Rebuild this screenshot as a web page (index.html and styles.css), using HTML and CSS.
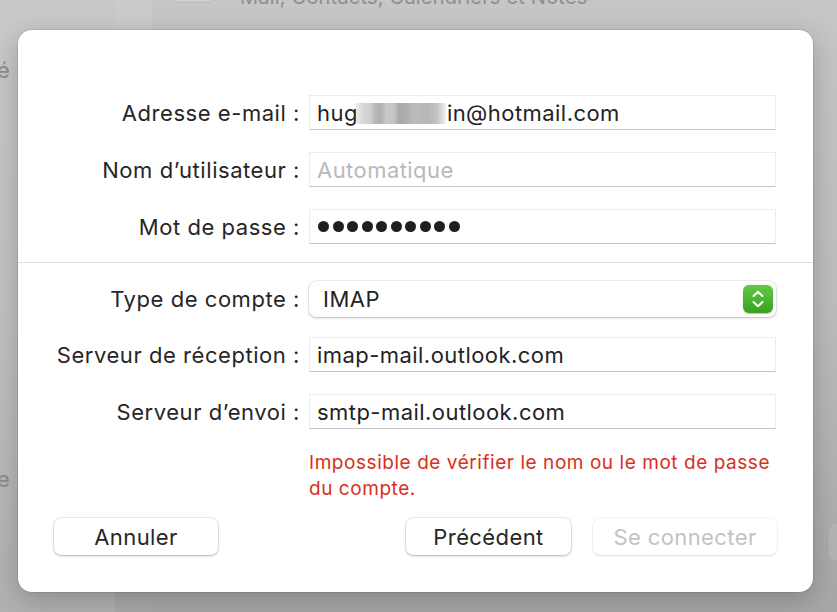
FILE: index.html
```html
<!DOCTYPE html>
<html lang="fr">
<head>
<meta charset="utf-8">
<title>Compte de messagerie</title>
<link rel="stylesheet" href="styles.css">
</head>
<body>
<div class="backdrop">
  <aside class="sidebar">
    <span class="side-text t1">é</span>
    <span class="side-text t2">e</span>
  </aside>
  <div class="strip"></div>
  <main class="pane">
    <div class="pane-row">
      <span class="pane-icon"></span>
      <span class="pane-title">Mail, Contacts, Calendriers et Notes</span>
    </div>
    <div class="pane-edge"></div>
  </main>
</div>

<div class="dialog">
  <div class="form">
    <div class="row">
      <label class="label">Adresse e-mail :</label>
      <div class="field">hug<span class="blur"></span>in@hotmail.com</div>
    </div>
    <div class="row">
      <label class="label">Nom d’utilisateur :</label>
      <div class="field placeholder">Automatique</div>
    </div>
    <div class="row">
      <label class="label">Mot de passe :</label>
      <div class="field dots"><span class="dot"></span><span class="dot"></span><span class="dot"></span><span class="dot"></span><span class="dot"></span><span class="dot"></span><span class="dot"></span><span class="dot"></span><span class="dot"></span><span class="dot"></span></div>
    </div>
  </div>

  <div class="sep"></div>

  <div class="form form2">
    <div class="row">
      <label class="label">Type de compte :</label>
      <div class="select">
        <span class="select-value">IMAP</span>
        <span class="stepper">
          <svg width="30" height="28" viewBox="0 0 30 28"><path d="M10.5 11 L15 6.8 L19.5 11" fill="none" stroke="#fff" stroke-width="2" stroke-linecap="round" stroke-linejoin="round"/><path d="M10.5 17 L15 21.2 L19.5 17" fill="none" stroke="#fff" stroke-width="2" stroke-linecap="round" stroke-linejoin="round"/></svg>
        </span>
      </div>
    </div>
    <div class="row">
      <label class="label">Serveur de réception :</label>
      <div class="field">imap-mail.outlook.com</div>
    </div>
    <div class="row">
      <label class="label">Serveur d’envoi :</label>
      <div class="field">smtp-mail.outlook.com</div>
    </div>
  </div>

  <p class="error">Impossible de vérifier le nom ou le mot de passe<br>du compte.</p>

  <div class="buttons">
    <button class="btn btn-cancel">Annuler</button>
    <span class="spacer"></span>
    <button class="btn btn-prev">Précédent</button>
    <button class="btn btn-connect" disabled>Se connecter</button>
  </div>
</div>
</body>
</html>
```

FILE: styles.css
```css
* { box-sizing: border-box; }

html, body {
  margin: 0;
  padding: 0;
  width: 837px;
  height: 612px;
  overflow: hidden;
}

body {
  font-family: "Inter", "Liberation Sans", sans-serif;
  background: linear-gradient(to bottom, #c6c6c6 0%, #bdbdbd 50%, #a7a7a7 100%);
  position: relative;
}

/* backdrop window */
.backdrop {
  display: flex;
  height: 612px;
}

.sidebar {
  width: 115px;
  display: flex;
  flex-direction: column;
  background: linear-gradient(to bottom, #c9c9c9 0%, #c2c2c2 50%, #b1b1b1 100%);
}

.side-text {
  font-size: 22px;
  color: #8d8d8d;
  margin-left: -3px;
  line-height: 24px;
}
.t1 { margin-top: 58px; }
.t2 { margin-top: 385px; }

.strip {
  width: 37px;
  background: linear-gradient(to bottom, #cbcbcb 0%, #c1c1c1 50%, #a9a9a9 100%);
}

.pane {
  flex: 1;
  display: flex;
  flex-direction: column;
  justify-content: space-between;
  padding-left: 20px;
}

.pane-row {
  display: flex;
  align-items: flex-end;
  gap: 25px;
  margin-top: -18px;
}

.pane-icon {
  width: 43px;
  height: 21px;
  border: 1px solid #b9b9b9;
  border-radius: 7px;
  background: #cecece;
}

.pane-title {
  font-size: 20px;
  letter-spacing: 0.2px;
  color: #8e8e8e;
  line-height: 24px;
  margin-bottom: -6px;
}

.pane-edge {
  align-self: flex-end;
  width: 8px;
  height: 36px;
  margin-bottom: 52px;
  border: 1px solid #b8b8b8;
  border-right: none;
  border-radius: 7px 0 0 7px;
  background: #b3b3b3;
}

/* dialog */
.dialog {
  position: absolute;
  left: 18px;
  top: 30px;
  width: 795px;
  height: 562px;
  background: #ffffff;
  border-radius: 14px;
  box-shadow: 0 0 0 1px rgba(0, 0, 0, 0.08), 0 8px 28px rgba(0, 0, 0, 0.22);
  padding: 65px 36px 0 0;
  display: flex;
  flex-direction: column;
}

.form {
  display: flex;
  flex-direction: column;
  gap: 22px;
}

.form2 { gap: 20px; }
.form2 .row:last-child { margin-top: 2px; }

.row {
  display: flex;
  align-items: center;
}

.label {
  width: 282px;
  margin-right: 9px;
  text-align: right;
  font-size: 22px;
  letter-spacing: 0.55px;
  color: #262626;
  white-space: nowrap;
}

.field {
  width: 467px;
  height: 35px;
  border: 1px solid #ececec;
  border-bottom-color: #c6c6c6;
  background: #fff;
  padding: 0 7px;
  display: flex;
  align-items: center;
  font-size: 22px;
  letter-spacing: 0.45px;
  color: #232323;
  white-space: nowrap;
}

.placeholder { color: #b9b9b9; }

.blur {
  display: inline-block;
  width: 90px;
  height: 21px;
  margin: 2px 1px 0 -2px;
  background: linear-gradient(to right,
    #ececec 0%, #d6d6d6 8%, #cfcfcf 16%, #b5b5b5 22%, #b2b2b2 28%,
    #c9c9c9 34%, #c4c4c4 42%, #a9a9a9 48%, #aeaeae 56%,
    #bcbcbc 64%, #b7b7b7 80%, #c2c2c2 90%, #f0f0f0 100%);
  border-radius: 2px;
}

.dots { gap: 3.5px; padding-left: 8px; }

.dot {
  width: 11px;
  height: 11px;
  border-radius: 50%;
  background: #1f1f1f;
}

.sep {
  height: 1px;
  background: #dedede;
  margin: 18px -36px 18px 0;
}

.select {
  width: 467px;
  height: 36px;
  border-radius: 7px;
  background: #fff;
  box-shadow: 0 0 0 0.5px rgba(0, 0, 0, 0.12), 0 1px 2.5px rgba(0, 0, 0, 0.22);
  display: flex;
  align-items: center;
  justify-content: space-between;
  padding: 0 3px 0 14px;
}

.select-value {
  font-size: 22px;
  letter-spacing: 0.5px;
  color: #232323;
  margin-top: -1px;
}

.stepper {
  width: 30px;
  height: 28px;
  border-radius: 6px;
  background: linear-gradient(to bottom, #62c947 0%, #4cb632 50%, #3a9f22 100%);
  box-shadow: 0 0.5px 1px rgba(0, 0, 0, 0.25);
  display: flex;
}

.error {
  margin: 21px 0 0 291px;
  font-size: 19px;
  letter-spacing: 0.55px;
  line-height: 26px;
  color: #d7301c;
}

.buttons {
  display: flex;
  gap: 22px;
  margin-top: 16px;
  padding-left: 36px;
}

.spacer { flex: 1; }

.btn {
  height: 37px;
  border: none;
  border-radius: 7px;
  background: #fff;
  box-shadow: 0 0 0 0.5px rgba(0, 0, 0, 0.12), 0 1px 2.5px rgba(0, 0, 0, 0.25);
  font-family: "Inter", "Liberation Sans", sans-serif;
  font-size: 22px;
  letter-spacing: 0.4px;
  color: #262626;
  padding: 0;
}

.btn-cancel { width: 164px; }
.btn-prev { width: 165px; }
.btn-connect {
  width: 184px;
  color: #c3c3c3;
  box-shadow: 0 0 0 0.5px rgba(0, 0, 0, 0.07), 0 1px 2px rgba(0, 0, 0, 0.1);
}
```
